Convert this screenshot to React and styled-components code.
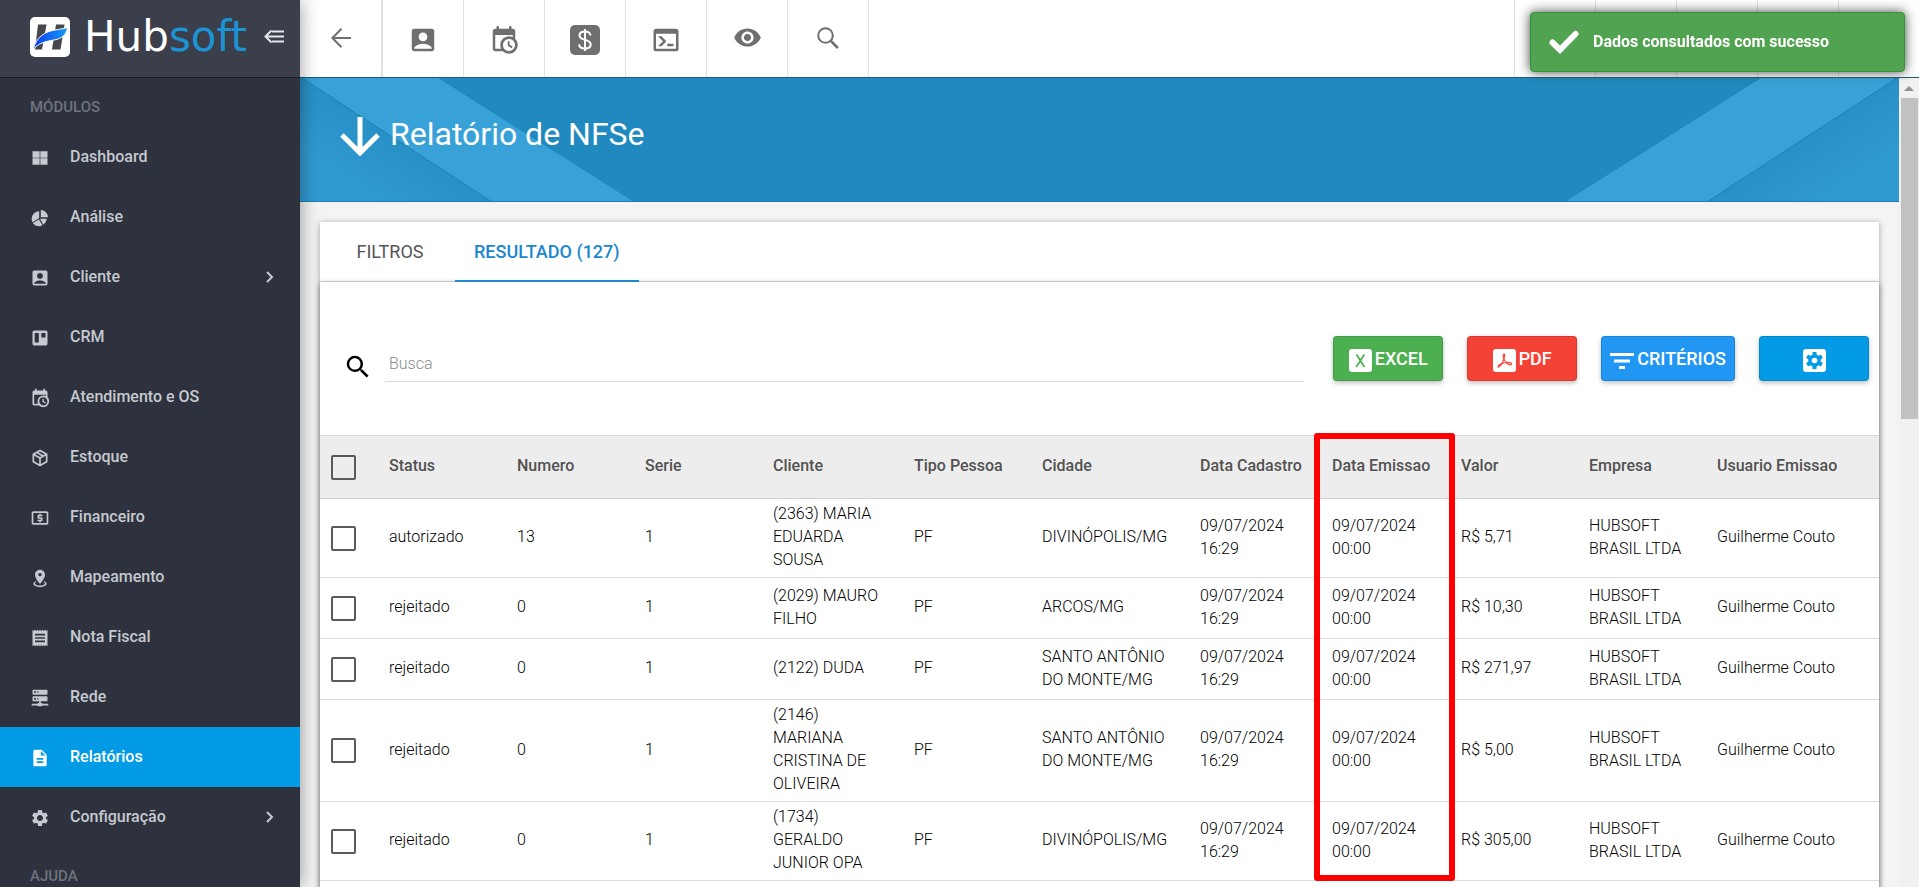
import React from "react";
import styled, { createGlobalStyle, css } from "styled-components";
import {
  MdAccountBox,
  MdReceipt,
  MdSettings,
  MdDescription,
  MdSearch,
  MdRemoveRedEye,
} from "react-icons/md";

const GlobalStyle = createGlobalStyle`
  *, *::before, *::after { box-sizing: border-box; }
  html, body { margin: 0; overflow: hidden; }
  body {
    font-family: Roboto, "Liberation Sans", sans-serif;
    font-size: 16px;
    color: #212121;
    background: #f4f4f4;
  }
  button, input { font-family: inherit; }
`;

/* ---------- icons ---------- */

const paths = {
  tiles: "M3 4h8.6v7.6H3zM12.4 4H21v7.6h-8.6zM3 12.4h8.6V20H3zM12.4 12.4H21V20h-8.6z",
  pie: "M21.5,11H13V2.5A8.5,8.5 0 0,1 21.5,11M20,13C20,15.78 18.2,18.6 15.9,20L12,13H20M11,22C7.6,22 5,20.4 3.3,18L10.8,13.7L14.9,20.8C13.7,21.6 12.3,22 11,22M2,13.2A9,9 0 0,1 11,4V12.42L2.8,17.1C2.3,16 2,14.6 2,13.2Z",
  board: "M5 3h14a2 2 0 0 1 2 2v14a2 2 0 0 1-2 2H5a2 2 0 0 1-2-2V5a2 2 0 0 1 2-2zM5.6 6v11.5h5V6zM13.6 6v5.5h5V6z",
  calendarClock:
    "M15,13H16.5V15.82L18.94,17.23L18.19,18.53L15,16.69V13M19,8H5V19H9.67C9.24,18.09 9,17.07 9,16A7,7 0 0,1 16,9C17.07,9 18.09,9.24 19,9.67V8M5,21C3.89,21 3,20.1 3,19V5C3,3.89 3.89,3 5,3H6V1H8V3H16V1H18V3H19A2,2 0 0,1 21,5V11.1C22.24,12.36 23,14.09 23,16A7,7 0 0,1 16,23C14.09,23 12.36,22.24 11.1,21H5M16,11.15A4.85,4.85 0 0,0 11.15,16C11.15,18.68 13.32,20.85 16,20.85A4.85,4.85 0 0,0 20.85,16C20.85,13.32 18.68,11.15 16,11.15Z",
  box: "M21,16.5C21,16.88 20.79,17.21 20.47,17.38L12.57,21.82C12.41,21.94 12.21,22 12,22C11.79,22 11.59,21.94 11.43,21.82L3.53,17.38C3.21,17.21 3,16.88 3,16.5V7.5C3,7.12 3.21,6.79 3.53,6.62L11.43,2.18C11.59,2.06 11.79,2 12,2C12.21,2 12.41,2.06 12.57,2.18L20.47,6.62C20.79,6.79 21,7.12 21,7.5V16.5M12,4.15L10.11,5.22L16,8.61L17.96,7.5L12,4.15M6.04,7.5L12,10.85L13.96,9.75L8.08,6.35L6.04,7.5M5,15.91L11,19.29V12.58L5,9.21V15.91M19,15.91V9.21L13,12.58V19.29L19,15.91Z",
  cash: "M20,4H4C2.89,4 2,4.89 2,6V18A2,2 0 0,0 4,20H20A2,2 0 0,0 22,18V6C22,4.89 21.1,4 20,4M20,18H4V6H20V18M11,17H13V16H14A1,1 0 0,0 15,15V12A1,1 0 0,0 14,11H11V10H15V8H13V7H11V8H10A1,1 0 0,0 9,9V12A1,1 0 0,0 10,13H13V14H9V16H11V17Z",
  pin: "M12,2C15.31,2 18,4.66 18,7.95C18,12.41 12,19 12,19C12,19 6,12.41 6,7.95C6,4.66 8.69,2 12,2M12,6A2,2 0 0,0 10,8A2,2 0 0,0 12,10A2,2 0 0,0 14,8A2,2 0 0,0 12,6M20,19C20,21.21 16.42,23 12,23C7.58,23 4,21.21 4,19C4,17.71 5.22,16.56 7.11,15.83L7.75,16.74C6.67,17.19 6,17.81 6,18.5C6,19.88 8.69,21 12,21C15.31,21 18,19.88 18,18.5C18,17.81 17.33,17.19 16.25,16.74L16.89,15.83C18.78,16.56 20,17.71 20,19Z",
  server:
    "M13,18H14A1,1 0 0,1 15,19H22V21H15A1,1 0 0,1 14,22H10A1,1 0 0,1 9,21H2V19H9A1,1 0 0,1 10,18H11V16H4A1,1 0 0,1 3,15V11A1,1 0 0,1 4,10H20A1,1 0 0,1 21,11V15A1,1 0 0,1 20,16H13V18M4,2H20A1,1 0 0,1 21,3V7A1,1 0 0,1 20,8H4A1,1 0 0,1 3,7V3A1,1 0 0,1 4,2M9,6H10V4H9V6M9,14H10V12H9V14M5,4V6H7V4H5M5,12V14H7V12H5Z",
  console:
    "M20,19V7H4V19H20M20,3A2,2 0 0,1 22,5V19A2,2 0 0,1 20,21H4A2,2 0 0,1 2,19V5C2,3.89 2.9,3 4,3H20M13,17V15H18V17H13M9.58,13L5.57,9H8.4L11.7,12.3C12.09,12.69 12.09,13.33 11.7,13.72L8.42,17H5.59L9.58,13Z",
};

const PathIcon = ({ name, size }) => (
  <svg width={size} height={size} viewBox="0 0 24 24" fill="currentColor" fillRule="evenodd" aria-hidden="true">
    <path d={paths[name]} />
  </svg>
);

const BackIcon = () => (
  <svg width="20" height="20" viewBox="0 0 20 20" fill="none" stroke="currentColor" strokeWidth="2" aria-hidden="true">
    <path d="M20 10H1.5M10.500 0.800L1.400 10l9.100 9.200" />
  </svg>
);

const MoneyIcon = () => (
  <svg width="30" height="30" viewBox="0 0 30 30" fill="none" aria-hidden="true">
    <rect width="30" height="30" rx="5" fill="currentColor" />
    <path d="M20.500 10.500c0-2.600-2.300-4-5.500-4s-5.500 1.500-5.500 4.100c0 5.800 11.200 2.800 11.200 8.700 0 2.700-2.400 4.200-5.700 4.200s-5.800-1.500-5.800-4.300M15 4v22" stroke="#fff" strokeWidth="2" />
  </svg>
);

const ThinSearchIcon = () => (
  <svg width="22" height="22" viewBox="0 0 22 22" fill="none" stroke="currentColor" strokeWidth="2" aria-hidden="true">
    <circle cx="8.500" cy="8.500" r="7.300" />
    <path d="M13.800 13.800l7 7.200" strokeWidth="2.600" />
  </svg>
);

const ChevronIcon = () => (
  <svg width="8" height="12" viewBox="0 0 8 12" fill="none" stroke="currentColor" strokeWidth="2" aria-hidden="true">
    <path d="M1 1l5 5-5 5" />
  </svg>
);

const CollapseIcon = () => (
  <svg width="20" height="15" viewBox="0 0 20 15" fill="none" stroke="currentColor" strokeWidth="2" aria-hidden="true">
    <path d="M7.500 1.500L1.500 7.500l6 6M2 7.500h18M8 2.500h12M8 12.500h12" />
  </svg>
);

const DownIcon = () => (
  <svg width="40" height="42" viewBox="0 0 40 42" fill="none" stroke="currentColor" strokeWidth="5" aria-hidden="true">
    <path d="M20 1v36M2 19l18 18 18-18" />
  </svg>
);

const BrandMark = () => (
  <svg width="40" height="40" viewBox="0 0 40 40" aria-hidden="true">
    <defs>
      <linearGradient id="swoosh" x1="0" y1="0" x2="1" y2="0">
        <stop offset="0" stopColor="#0a3bf0" />
        <stop offset="1" stopColor="#159cf5" />
      </linearGradient>
    </defs>
    <rect width="40" height="40" rx="5" fill="#fff" />
    <path d="M8 7.500h8.500l-4.500 25H5zM26 7.500h8.500l-4 25h-8.500z" fill="#47474b" />
    <path d="M3 33C6 20 15 14.500 25 13c5-.8 9-1.500 12.500-2.500-1 7-5 11-13.500 12.500C15 24.500 8 26 3 33z" fill="url(#swoosh)" stroke="#fff" strokeWidth="1" />
  </svg>
);

const FilterIcon = () => (
  <svg width="24" height="16" viewBox="0 0 24 16" fill="currentColor" aria-hidden="true">
    <path d="M0 0h24v3H0zM4 6.500h16v3H4zM9 13h6v3H9z" />
  </svg>
);

const ExcelIcon = () => (
  <svg width="23" height="23" viewBox="0 0 23 23" aria-hidden="true">
    <rect width="23" height="23" rx="3" fill="#fff" />
    <path d="M7.500 5.500l8 12.500M15.400 5.500l-8.200 12.500" stroke="#4caf50" strokeWidth="1.700" />
  </svg>
);

const PdfIcon = () => (
  <svg width="23" height="23" viewBox="0 0 23 23" fill="none" aria-hidden="true">
    <rect width="23" height="23" rx="3" fill="#fff" />
    <path
      d="M11 5c-1.500 0-1 3 .5 6 1.800 3.500 4.500 5.200 6.500 4.500 1.500-1-.5-2.200-4-2-4 .2-9 2-9 4 .3 1.700 3-.6 4.700-4.500C11.200 9.500 12.500 5 11 5z"
      stroke="#f44336"
      strokeWidth="1.200"
    />
  </svg>
);

const GearBoxIcon = () => (
  <svg width="23" height="23" viewBox="0 0 23 23" fill="none" aria-hidden="true">
    <rect width="23" height="23" rx="3" fill="#fff" />
    <circle cx="11.500" cy="11.500" r="4.300" stroke="#039be5" strokeWidth="4" />
    <path d="M11.500 3v17M4.100 7.200l14.800 8.600M4.100 15.800l14.800-8.600" stroke="#039be5" strokeWidth="4" />
    <circle cx="11.500" cy="11.500" r="2.800" fill="#fff" />
  </svg>
);

const CheckIcon = () => (
  <svg width="30" height="24" viewBox="0 0 30 24" fill="none" aria-hidden="true">
    <path d="M3.500 12.500l7.500 7.300L26.500 4" stroke="#fff" strokeWidth="6" strokeLinecap="round" />
  </svg>
);

/* ---------- shell ---------- */

const Shell = styled.div`
  display: grid;
  grid-template-columns: 300px minmax(0, 1fr);
  height: 100vh;
  overflow: hidden;
`;

const Sidebar = styled.aside`
  position: relative;
  z-index: 2;
  overflow: hidden;
  background: #2d323e;
  box-shadow: 0 0 18px rgba(0, 0, 0, 0.4);
  color: #c6c9cf;
`;

const Brand = styled.header`
  display: flex;
  align-items: center;
  height: 78px;
  padding: 0 16px 4px 30px;
  background: #3a3f4b;
  border-bottom: 1px solid #181c28;
`;

const BrandName = styled.span`
  flex: 1;
  padding-left: 14px;
  font-family: "DejaVu Sans", sans-serif;
  font-size: 42px;
  line-height: 48px;
  color: #fff;
`;

const BrandAccent = styled.span`
  color: #1c93d3;
`;

const IconButton = styled.button`
  display: flex;
  padding: 0;
  border: 0;
  background: none;
  color: #e4e6ea;
`;

const GroupTitle = styled.h2`
  height: 49px;
  margin: 0;
  padding: 9px 30px 0;
  font-size: 15px;
  line-height: 40px;
  font-weight: 500;
  color: #6f737d;
`;

const NavList = styled.ul`
  margin: 0;
  padding: 0;
  list-style: none;
`;

const NavLink = styled.a`
  display: flex;
  align-items: center;
  height: 60px;
  padding: 0 26px 0 30px;
  font-weight: 500;
  text-decoration: none;
  color: inherit;
  ${(p) =>
    p.$active &&
    css`
      background: #039be5;
      color: #fff;
    `}
`;

const NavIcon = styled.span`
  display: flex;
  width: 40px;
  padding-top: 1px;
`;

const NavLabel = styled.span`
  flex: 1;
  padding-bottom: 1px;
  line-height: 20px;
`;

const Main = styled.div`
  display: flex;
  flex-direction: column;
  min-width: 0;
  height: 100vh;
`;

const Toolbar = styled.header`
  display: flex;
  justify-content: space-between;
  flex: none;
  height: 78px;
  background: #fff;
  border-bottom: 1px solid #1a5a7c;
`;

const ToolGroup = styled.div`
  display: flex;
`;

const ToolButton = styled.button`
  display: flex;
  align-items: center;
  justify-content: center;
  width: ${(p) => (p.$wide ? "83px" : "81px")};
  padding: ${(p) => (p.$lower ? "2px 0 0" : "0 0 2px")};
  border: 0;
  border-right: ${(p) => (p.$wide ? "2px" : "1px")} solid #e0e0e0;
  background: none;
  color: #6f6f6f;
`;

const EndSlot = styled.div`
  width: 81px;
  border-left: 1px solid #e0e0e0;
`;

const Body = styled.div`
  display: flex;
  flex: 1;
  min-height: 0;
`;

const Content = styled.main`
  flex: 1;
  min-width: 0;
`;

const Scrollbar = styled.div`
  display: flex;
  flex-direction: column;
  align-items: center;
  width: 20px;
  background: #f1f1f1;
`;

const ScrollArrow = styled.span`
  width: 0;
  margin: 8px 0 7px;
  border: 5px solid transparent;
  border-top: 0;
  border-bottom-color: #8f8f8f;
`;

const ScrollThumb = styled.span`
  width: 17px;
  height: 321px;
  background: #c1c1c1;
`;

/* ---------- banner ---------- */

const Banner = styled.section`
  position: relative;
  display: flex;
  align-items: center;
  height: 124px;
  padding: 0 40px 12px;
  background: #2089bf;
  border-bottom: 1px solid #187db0;
  color: #fff;
`;

const BannerArt = styled.svg`
  position: absolute;
  top: 0;
  ${(p) => (p.$mirrored ? "right: 0; transform: scaleX(-1);" : "left: 0;")}
`;

const BannerTitle = styled.h1`
  position: relative;
  display: flex;
  align-items: center;
  gap: 10px;
  margin: 0;
  font-size: 32px;
  line-height: 40px;
  font-weight: 400;
`;

const BannerIcon = styled.span`
  display: flex;
  padding-top: 7px;
`;

const BannerStripes = ({ mirrored }) => {
  const id = mirrored ? "fadeRight" : "fadeLeft";
  return (
    <BannerArt $mirrored={mirrored} width="336" height="123" viewBox="0 0 336 123" aria-hidden="true">
      <defs>
        <linearGradient id={id} gradientUnits="userSpaceOnUse" x1="96" y1="62" x2="60" y2="117">
          <stop offset="0" stopColor="#2790c6" />
          <stop offset="1" stopColor="#309bd1" />
        </linearGradient>
      </defs>
      <path d="M0 0h139l196 124H0z" fill="#38a2d8" />
      <path d="M2 0l190 124H0V0z" fill={`url(#${id})`} />
      <path d="M2 0l190 124" stroke="#1c81b5" strokeWidth="1" />
      <path d="M139 0l196 124" stroke="#1f86bc" strokeWidth="1" />
    </BannerArt>
  );
};

/* ---------- card ---------- */

const Card = styled.section`
  margin: 20px;
  background: #fff;
  box-shadow: 0 1px 6px rgba(0, 0, 0, 0.35);
`;

const Tabs = styled.div`
  display: flex;
  gap: 10px;
  height: 60px;
  padding: 0 15px;
  border-bottom: 1px solid #d6d6d6;
`;

const Tab = styled.button`
  min-width: 110px;
  height: 60px;
  padding: 0 19px;
  border: 0;
  border-bottom: 2px solid ${(p) => (p.$active ? "#2089cb" : "transparent")};
  background: none;
  font-size: 18px;
  font-weight: ${(p) => (p.$active ? 500 : 400)};
  color: ${(p) => (p.$active ? "#1b87cf" : "#555")};
`;

const Panel = styled.div`
  padding-bottom: 60px;
  box-shadow: 0 2px 6px rgba(0, 0, 0, 0.4);
`;

const Controls = styled.div`
  display: flex;
  align-items: center;
  gap: 24px;
  height: 153px;
  padding: 0 10px 0 23px;
`;

const SearchField = styled.label`
  display: flex;
  align-items: center;
  flex: 1;
  gap: 12px;
  padding: 7px 5px 0 0;
  color: #000;
`;

const SearchGlyph = styled.span`
  display: flex;
  padding-top: 9px;
`;

const SearchInput = styled.input`
  flex: 1;
  min-width: 0;
  height: 39px;
  padding: 4px 4px 0;
  border: 0;
  border-bottom: 1px solid #dcdcdc;
  background: none;
  font-size: 16px;
  font-weight: 300;
  &::placeholder { color: #8c8c8c; opacity: 1; }
`;

const tones = { green: "#4caf50", red: "#f44336", blue: "#2196f3", cyan: "#039be5" };

const ActionButton = styled.button`
  display: flex;
  align-items: center;
  justify-content: center;
  gap: 3px;
  min-width: 110px;
  height: 45px;
  padding: 0 8px;
  border: 1px solid rgba(0, 0, 0, 0.12);
  border-radius: 4px;
  background: ${(p) => tones[p.$tone]};
  box-shadow: 0 2px 5px rgba(0, 0, 0, 0.26);
  font-size: 18px;
  font-weight: 500;
  line-height: 20px;
  color: #fff;
`;

const ActionIcon = styled.span`
  display: flex;
  padding-top: 4px;
`;

/* ---------- table ---------- */

const Table = styled.table`
  width: 100%;
  table-layout: fixed;
  border-collapse: separate;
  border-spacing: 0;
`;

const Column = styled.col`
  width: ${(p) => p.$width}px;
`;

const HeadCell = styled.th`
  position: relative;
  height: 64px;
  padding: 0 0 3px;
  border-top: 1px solid #d8d8d8;
  border-bottom: 1px solid #cfcfcf;
  background: #ededed;
  font-weight: 500;
  line-height: 23px;
  text-align: left;
  white-space: nowrap;
  color: #525252;
`;

const Cell = styled.td`
  height: 61px;
  padding: 3px 28px 6px 0;
  border-bottom: 1px solid #dedede;
  font-weight: 300;
  line-height: 23px;
  color: #000;
`;

const CheckInput = styled.input`
  appearance: none;
  display: block;
  width: 25px;
  height: 25px;
  margin: 3px 0 0 11px;
  border: 2px solid #5a5a5a;
  border-radius: 2px;
  background: transparent;
`;

const Highlight = styled.span`
  position: absolute;
  top: -3px;
  left: -18px;
  width: 141px;
  height: 448px;
  border: 6px solid #f00;
  border-radius: 3px;
  pointer-events: none;
`;

/* ---------- toast ---------- */

const Toast = styled.div`
  position: fixed;
  z-index: 3;
  top: 12px;
  right: 14px;
  display: flex;
  align-items: center;
  gap: 14px;
  width: 375px;
  height: 60px;
  padding: 0 18px;
  border: 1px solid #2f9433;
  border-radius: 4px;
  background: #51a351;
  box-shadow: 0 0 12px #444;
  font-weight: 700;
  line-height: 20px;
  color: #fff;
`;

/* ---------- data ---------- */

const navItems = [
  { label: "Dashboard", icon: <PathIcon name="tiles" size={20} /> },
  { label: "Análise", icon: <PathIcon name="pie" size={20} /> },
  { label: "Cliente", icon: <MdAccountBox size={20} />, expandable: true },
  { label: "CRM", icon: <PathIcon name="board" size={20} /> },
  { label: "Atendimento e OS", icon: <PathIcon name="calendarClock" size={20} /> },
  { label: "Estoque", icon: <PathIcon name="box" size={20} /> },
  { label: "Financeiro", icon: <PathIcon name="cash" size={20} /> },
  { label: "Mapeamento", icon: <PathIcon name="pin" size={20} /> },
  { label: "Nota Fiscal", icon: <MdReceipt size={20} /> },
  { label: "Rede", icon: <PathIcon name="server" size={20} /> },
  { label: "Relatórios", icon: <MdDescription size={20} />, active: true },
  { label: "Configuração", icon: <MdSettings size={20} />, expandable: true },
];

const tools = [
  { label: "Clientes", icon: <MdAccountBox size={30} />, lower: true },
  { label: "Agenda", icon: <PathIcon name="calendarClock" size={30} />, lower: true },
  { label: "Financeiro", icon: <MoneyIcon />, lower: true },
  { label: "Console", icon: <PathIcon name="console" size={30} />, lower: true },
  { label: "Visualizar", icon: <MdRemoveRedEye size={29} /> },
  { label: "Pesquisar", icon: <ThinSearchIcon /> },
];

const columns = [
  ["Status", 128],
  ["Numero", 128],
  ["Serie", 128],
  ["Cliente", 141],
  ["Tipo Pessoa", 128],
  ["Cidade", 158],
  ["Data Cadastro", 132],
  ["Data Emissao", 129],
  ["Valor", 128],
  ["Empresa", 128],
  ["Usuario Emissao", 162],
];

const makeRow = (status, number, client, city, value) => [
  status, number, "1", client, "PF", city,
  "09/07/2024 16:29", "09/07/2024 00:00", value, "HUBSOFT BRASIL LTDA", "Guilherme Couto",
];

const rows = [
  makeRow("autorizado", "13", "(2363) MARIA EDUARDA SOUSA", "DIVINÓPOLIS/MG", "R$ 5,71"),
  makeRow("rejeitado", "0", "(2029) MAURO FILHO", "ARCOS/MG", "R$ 10,30"),
  makeRow("rejeitado", "0", "(2122) DUDA", "SANTO ANTÔNIO DO MONTE/MG", "R$ 271,97"),
  makeRow("rejeitado", "0", "(2146) MARIANA CRISTINA DE OLIVEIRA", "SANTO ANTÔNIO DO MONTE/MG", "R$ 5,00"),
  makeRow("rejeitado", "0", "(1734) GERALDO JUNIOR OPA", "DIVINÓPOLIS/MG", "R$ 305,00"),
];

/* ---------- parts ---------- */

const NavEntry = ({ item }) => (
  <li>
    <NavLink href="#" $active={item.active}>
      <NavIcon>{item.icon}</NavIcon>
      <NavLabel>{item.label}</NavLabel>
      {item.expandable && <ChevronIcon />}
    </NavLink>
  </li>
);

const ResultsTable = () => (
  <Table>
    <colgroup>
      <Column $width={69} />
      {columns.map(([name, width]) => (
        <Column key={name} $width={width} />
      ))}
    </colgroup>
    <thead>
      <tr>
        <HeadCell>
          <CheckInput type="checkbox" aria-label="Selecionar todos" />
        </HeadCell>
        {columns.map(([name]) => (
          <HeadCell key={name} scope="col">
            {name}
            {name === "Data Emissao" && <Highlight />}
          </HeadCell>
        ))}
      </tr>
    </thead>
    <tbody>
      {rows.map((row) => (
        <tr key={row[3]}>
          <Cell>
            <CheckInput type="checkbox" aria-label={`Selecionar ${row[3]}`} />
          </Cell>
          {row.map((value, i) => (
            <Cell key={columns[i][0]}>{value}</Cell>
          ))}
        </tr>
      ))}
    </tbody>
  </Table>
);

export default function App() {
  return (
    <>
      <GlobalStyle />
      <Shell>
        <Sidebar>
          <Brand>
            <BrandMark />
            <BrandName>
              Hub<BrandAccent>soft</BrandAccent>
            </BrandName>
            <IconButton type="button" aria-label="Recolher menu">
              <CollapseIcon />
            </IconButton>
          </Brand>
          <nav>
            <GroupTitle>MÓDULOS</GroupTitle>
            <NavList>
              {navItems.map((item) => (
                <NavEntry key={item.label} item={item} />
              ))}
            </NavList>
            <GroupTitle>AJUDA</GroupTitle>
          </nav>
        </Sidebar>

        <Main>
          <Toolbar>
            <ToolGroup>
              <ToolButton type="button" $wide aria-label="Voltar">
                <BackIcon />
              </ToolButton>
              {tools.map((tool) => (
                <ToolButton key={tool.label} type="button" $lower={tool.lower} aria-label={tool.label}>
                  {tool.icon}
                </ToolButton>
              ))}
            </ToolGroup>
            <ToolGroup>
              <EndSlot />
              <EndSlot />
              <EndSlot />
              <EndSlot />
              <EndSlot />
            </ToolGroup>
          </Toolbar>

          <Body>
            <Content>
              <Banner>
                <BannerStripes />
                <BannerStripes mirrored />
                <BannerTitle>
                  <BannerIcon>
                    <DownIcon />
                  </BannerIcon>
                  Relatório de NFSe
                </BannerTitle>
              </Banner>

              <Card>
                <Tabs role="tablist">
                  <Tab type="button" role="tab" aria-selected="false">FILTROS</Tab>
                  <Tab type="button" role="tab" aria-selected="true" $active>RESULTADO (127)</Tab>
                </Tabs>
                <Panel>
                  <Controls>
                    <SearchField>
                      <SearchGlyph>
                        <MdSearch size={30} aria-hidden="true" />
                      </SearchGlyph>
                      <SearchInput type="text" placeholder="Busca" aria-label="Busca" />
                    </SearchField>
                    <ActionButton type="button" $tone="green">
                      <ActionIcon><ExcelIcon /></ActionIcon>EXCEL
                    </ActionButton>
                    <ActionButton type="button" $tone="red">
                      <ActionIcon><PdfIcon /></ActionIcon>PDF
                    </ActionButton>
                    <ActionButton type="button" $tone="blue">
                      <ActionIcon><FilterIcon /></ActionIcon>CRITÉRIOS
                    </ActionButton>
                    <ActionButton type="button" $tone="cyan" aria-label="Configurar">
                      <ActionIcon><GearBoxIcon /></ActionIcon>
                    </ActionButton>
                  </Controls>
                  <ResultsTable />
                </Panel>
              </Card>
            </Content>
            <Scrollbar aria-hidden="true">
              <ScrollArrow />
              <ScrollThumb />
            </Scrollbar>
          </Body>
        </Main>
      </Shell>
      <Toast role="status">
        <CheckIcon />
        Dados consultados com sucesso
      </Toast>
    </>
  );
}
